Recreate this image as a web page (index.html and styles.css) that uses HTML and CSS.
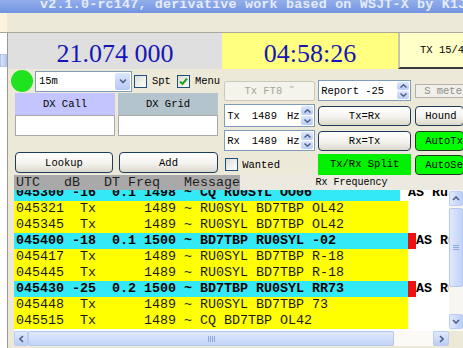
FILE: index.html
```html
<!DOCTYPE html>
<html lang="en">
<head>
    <meta charset="UTF-8">
    <meta name="viewport" content="width=device-width, initial-scale=1.0">
    <title>JTDX</title>
    <link rel="stylesheet" href="styles.css">
</head>
<body>
    <div class="titlebar">v2.1.0-rc147, derivative work based on WSJT-X by K1JT</div>
    <div class="menubar"><div class="menu-edge"></div></div>

    <div class="main">
        <div class="side-strip"><div class="side-btn"></div></div>

        <div class="content">
            <div class="displays">
                <div class="freq">21.074 000</div>
                <div class="clock">04:58:26</div>
                <div class="txbox">TX 15/45</div>
            </div>

            <div class="controls">
                <div class="left-col">
                    <div class="band-row">
                        <span class="led"></span>
                        <div class="combo">
                            <span class="combo-text">15m</span>
                            <span class="combo-btn">
                                <svg width="8" height="6" viewBox="0 0 8 6"><path d="M1 1.5 L4 4.5 L7 1.5" fill="none" stroke="#4d6185" stroke-width="1.6"/></svg>
                            </span>
                        </div>
                        <span class="box"></span><span class="check-label">Spt</span>
                        <span class="box menu-box">
                            <svg width="11" height="11" viewBox="0 0 11 11"><path d="M2 5.5 L4.5 8 L9 2.5" fill="none" stroke="#21a121" stroke-width="2"/></svg>
                        </span><span class="check-label">Menu</span>
                    </div>

                    <div class="dx-grid">
                        <div class="dx-head call">DX Call</div>
                        <div class="dx-head grid">DX Grid</div>
                        <div class="dx-input"></div>
                        <div class="dx-input"></div>
                    </div>

                    <div class="dx-buttons">
                        <button class="btn">Lookup</button>
                        <button class="btn">Add</button>
                    </div>
                </div>

                <div class="right-col">
                    <button class="btn disabled">Tx FT8 ˜</button>
                    <div class="spin">
                        <span class="spin-val">Report -25</span>
                        <span class="spin-btns">
                            <span><svg width="7" height="4" viewBox="0 0 7 4"><path d="M0.5 3.5 L3.5 0.8 L6.5 3.5" fill="none" stroke="#4d6185" stroke-width="1.5"/></svg></span>
                            <span><svg width="7" height="4" viewBox="0 0 7 4"><path d="M0.5 0.5 L3.5 3.2 L6.5 0.5" fill="none" stroke="#4d6185" stroke-width="1.5"/></svg></span>
                        </span>
                    </div>
                    <div class="smeter">S meter</div>

                    <div class="spin">
                        <span class="spin-val"><span>Tx</span><span class="hz-num">1489</span><span class="hz">Hz</span></span>
                        <span class="spin-btns">
                            <span><svg width="7" height="4" viewBox="0 0 7 4"><path d="M0.5 3.5 L3.5 0.8 L6.5 3.5" fill="none" stroke="#4d6185" stroke-width="1.5"/></svg></span>
                            <span><svg width="7" height="4" viewBox="0 0 7 4"><path d="M0.5 0.5 L3.5 3.2 L6.5 0.5" fill="none" stroke="#4d6185" stroke-width="1.5"/></svg></span>
                        </span>
                    </div>
                    <button class="btn">Tx=Rx</button>
                    <button class="btn side">Hound</button>

                    <div class="spin">
                        <span class="spin-val"><span>Rx</span><span class="hz-num">1489</span><span class="hz">Hz</span></span>
                        <span class="spin-btns">
                            <span><svg width="7" height="4" viewBox="0 0 7 4"><path d="M0.5 3.5 L3.5 0.8 L6.5 3.5" fill="none" stroke="#4d6185" stroke-width="1.5"/></svg></span>
                            <span><svg width="7" height="4" viewBox="0 0 7 4"><path d="M0.5 0.5 L3.5 3.2 L6.5 0.5" fill="none" stroke="#4d6185" stroke-width="1.5"/></svg></span>
                        </span>
                    </div>
                    <button class="btn">Rx=Tx</button>
                    <button class="btn side green">AutoTx</button>

                    <div class="wanted"><span class="box"></span><span class="check-label">Wanted</span></div>
                    <div class="split">Tx/Rx Split</div>
                    <button class="btn side green">AutoSeq</button>
                </div>
            </div>

            <div class="lists">
                <div class="list-head">
                    <div class="head-left">UTC   dB   DT Freq   Message</div>
                    <div class="head-right">Rx Frequency</div>
                </div>

                <div class="list-body">
                    <div class="rows">
                        <div class="rows-inner">
                            <div class="row bold"><span class="msg cq short">045300 -16  0.1 1498 ~ CQ RU0SYL OO06</span><span class="country gap">AS Russia</span></div>
                            <div class="row"><span class="msg tx">045321  Tx      1489 ~ RU0SYL BD7TBP OL42</span></div>
                            <div class="row"><span class="msg tx">045345  Tx      1489 ~ RU0SYL BD7TBP OL42</span></div>
                            <div class="row bold"><span class="msg cq">045400 -18  0.1 1500 ~ BD7TBP RU0SYL -02</span><span class="mark"></span><span class="country">AS Russia</span></div>
                            <div class="row"><span class="msg tx">045417  Tx      1489 ~ RU0SYL BD7TBP R-18</span></div>
                            <div class="row"><span class="msg tx">045445  Tx      1489 ~ RU0SYL BD7TBP R-18</span></div>
                            <div class="row bold"><span class="msg cq">045430 -25  0.2 1500 ~ BD7TBP RU0SYL RR73</span><span class="mark"></span><span class="country">AS Russia</span></div>
                            <div class="row"><span class="msg tx">045448  Tx      1489 ~ RU0SYL BD7TBP 73</span></div>
                            <div class="row"><span class="msg tx">045515  Tx      1489 ~ CQ BD7TBP OL42</span></div>
                        </div>
                    </div>
                    <div class="vscroll">
                        <div class="sb-btn">
                            <svg width="8" height="5" viewBox="0 0 8 5"><path d="M1 4 L4 1 L7 4" fill="none" stroke="#4d6185" stroke-width="1.6"/></svg>
                        </div>
                        <div class="sb-thumb v-thumb"><span class="grip-h"></span><span class="grip-h"></span><span class="grip-h"></span></div>
                        <div class="sb-fill"></div>
                        <div class="sb-btn">
                            <svg width="8" height="5" viewBox="0 0 8 5"><path d="M1 1 L4 4 L7 1" fill="none" stroke="#4d6185" stroke-width="1.6"/></svg>
                        </div>
                    </div>
                </div>

                <div class="hscroll">
                    <div class="sb-btn h-btn">
                        <svg width="5" height="8" viewBox="0 0 5 8"><path d="M4 1 L1 4 L4 7" fill="none" stroke="#4d6185" stroke-width="1.6"/></svg>
                    </div>
                    <div class="sb-thumb h-thumb"><span class="grip-v"></span><span class="grip-v"></span><span class="grip-v"></span><span class="grip-v"></span></div>
                    <div class="h-track"></div>
                    <div class="sb-btn h-btn right">
                        <svg width="5" height="8" viewBox="0 0 5 8"><path d="M1 1 L4 4 L1 7" fill="none" stroke="#4d6185" stroke-width="1.6"/></svg>
                    </div>
                    <div class="h-corner"></div>
                </div>
            </div>
        </div>
    </div>
</body>
</html>
```

FILE: styles.css
```css
* {
    margin: 0;
    padding: 0;
    box-sizing: border-box;
}

body {
    width: 463px;
    height: 348px;
    overflow: hidden;
    background: #ece9d8;
    font-family: "Liberation Mono", monospace;
    font-size: 10.5px;
    color: #000;
}

.titlebar {
    height: 13px;
    overflow: hidden;
    background: linear-gradient(#93aeea, #7294df);
    color: #e4ecfc;
    font-weight: bold;
    font-size: 13.33px;
    line-height: 9px;
    padding-left: 40px;
    letter-spacing: 0.2px;
    white-space: nowrap;
}

.menubar {
    height: 20px;
    display: flex;
    border-bottom: 1px solid #aca899;
}

.menu-edge {
    width: 7px;
    background: #fbf3dc;
}

.main {
    display: flex;
    height: 315px;
}

.side-strip {
    width: 8px;
    background: #fff;
    border-right: 1px solid #9a9a9a;
    padding-top: 21px;
}

.side-btn {
    height: 13px;
    background: linear-gradient(90deg, #d8e2fa, #b9cbf1);
    border: 1px solid #b3c4ea;
}

.content {
    flex: 1;
    min-width: 0;
    display: flex;
    flex-direction: column;
}

/* big displays */
.displays {
    display: flex;
    height: 36px;
}

.freq, .clock {
    font-family: "Liberation Serif", serif;
    font-size: 26px;
    color: #1616b6;
    text-align: center;
    padding-top: 5px;
    line-height: 31px;
}

.freq {
    width: 214px;
    background: #dfdfdf;
}

.clock {
    width: 176px;
    background: #ffff80;
}

.txbox {
    flex: 1;
    background: #ffffc8;
    border-left: 2px solid #c8c6b0;
    border-bottom: 2px solid #3a3a3a;
    padding-left: 20px;
    line-height: 34px;
    white-space: nowrap;
    overflow: hidden;
}

/* controls */
.controls {
    display: flex;
    height: 106px;
}

.left-col {
    width: 214px;
}

.band-row {
    display: flex;
    align-items: center;
    height: 22px;
    margin-top: 1px;
}

.led {
    width: 22px;
    height: 22px;
    margin-left: 3px;
    border-radius: 50%;
    background: #1fe31f;
}

.combo {
    display: flex;
    width: 97px;
    height: 21px;
    margin-left: 2px;
    background: #fff;
    border: 1px solid #7f9db9;
}

.combo-text {
    flex: 1;
    padding-left: 3px;
    line-height: 19px;
}

.combo-btn {
    width: 15px;
    margin: 1px;
    border-radius: 2px;
    background: linear-gradient(#dce6fd, #b5c9f5);
    display: flex;
    align-items: center;
    justify-content: center;
}

.box {
    width: 13px;
    height: 13px;
    margin-left: 2px;
    border: 1px solid #1c5180;
    background: linear-gradient(135deg, #dcdcd7, #fff);
    display: flex;
    align-items: center;
    justify-content: center;
}

.menu-box {
    margin-left: 6px;
}

.check-label {
    margin-left: 5px;
}

.dx-grid {
    display: grid;
    grid-template-columns: 100px 100px;
    grid-template-rows: 22px 21px;
    column-gap: 3px;
    margin: 1px 0 0 7px;
}

.dx-head {
    text-align: center;
    line-height: 22px;
}

.dx-head.call {
    background: #c4c4ff;
}

.dx-head.grid {
    background: #b3c4cc;
}

.dx-input {
    background: #fff;
    border: 1px solid #a9a9a9;
}

.dx-buttons {
    display: grid;
    grid-template-columns: 98px 99px;
    column-gap: 6px;
    height: 21px;
    margin: 16px 0 0 7px;
}

.btn {
    font: inherit;
    color: #000;
    border: 1px solid #1f3b5c;
    border-radius: 4px;
    background: linear-gradient(#ffffff, #f3f2ed 55%, #dcd8cb);
    white-space: nowrap;
    overflow: hidden;
}

.btn.disabled {
    height: 18px;
    border: 1px solid #cbc8b8;
    border-radius: 2px;
    background: #f4f3ec;
    color: #a8a596;
}

.btn.green {
    background: #00ff00;
    border-color: #233a20;
}

.right-col {
    flex: 1;
    display: grid;
    grid-template-columns: 91px 93px 50px;
    grid-template-rows: 21px 23px 21px 21px;
    column-gap: 3px;
    row-gap: 3px;
    padding: 11px 0 0 4px;
    align-items: center;
}

.right-col .btn {
    height: 20px;
}

.right-col .btn.side {
    margin-left: 1px;
    text-align: left;
    padding-left: 9px;
}

.spin {
    display: flex;
    height: 100%;
    background: #fff;
    border: 1px solid #7f9db9;
}

.spin-val {
    flex: 1;
    display: flex;
    align-items: center;
    padding-left: 2px;
    white-space: nowrap;
}

.hz-num {
    margin-left: 12px;
}

.hz {
    margin-left: 10px;
}

.spin-btns {
    width: 14px;
    display: flex;
    flex-direction: column;
    gap: 1px;
    padding: 1px;
}

.spin-btns span {
    flex: 1;
    border-radius: 2px;
    background: linear-gradient(#dce6fd, #b8ccf6);
    display: flex;
    align-items: center;
    justify-content: center;
}

.smeter {
    height: 14px;
    margin-left: 1px;
    padding-left: 8px;
    line-height: 12px;
    border: 1px solid #b5b3a6;
    background: #f0efea;
    color: #8e8c82;
    white-space: nowrap;
}

.wanted {
    display: flex;
    align-items: center;
}

.wanted .box {
    margin-left: 1px;
}

.wanted .check-label {
    margin-left: 4px;
}

.split {
    height: 21px;
    background: #00f000;
    text-align: center;
    line-height: 21px;
}

/* decode lists */
.lists {
    display: flex;
    flex-direction: column;
}

.list-head {
    display: flex;
    height: 15px;
}

.head-left {
    width: 226px;
    margin-left: 6px;
    padding-left: 2px;
    background: #a9a9a9;
    color: #1e1e1e;
    font-size: 13.33px;
    line-height: 15px;
    white-space: pre;
    overflow: hidden;
}

.head-right {
    flex: 1;
    background: #ebe9e0;
    text-align: center;
    font-size: 10px;
    line-height: 15px;
}

.list-body {
    display: flex;
    height: 141px;
    margin-left: 6px;
}

.rows {
    flex: 1;
    min-width: 0;
    background: #fff;
    overflow: hidden;
    font-size: 13.33px;
}

.rows-inner {
    margin-top: -5px;
}

.row {
    display: flex;
    height: 16px;
    line-height: 16px;
    white-space: pre;
}

.row.bold {
    font-weight: bold;
}

.msg {
    width: 394px;
    padding-left: 2px;
    flex-shrink: 0;
}

.msg.short {
    width: 386px;
}

.msg.cq {
    background: #33e9f6;
}

.msg.tx {
    background: #ffff00;
    color: #1a1a1a;
}

.mark {
    width: 8px;
    flex-shrink: 0;
    background: #ee1111;
}

.country.gap {
    padding-left: 8px;
}

.vscroll {
    width: 14px;
    display: flex;
    flex-direction: column;
    background: #f7f6f1;
    padding: 1px 0 2px;
}

.sb-btn {
    height: 15px;
    border: 1px solid #bccdf3;
    border-radius: 2px;
    background: linear-gradient(90deg, #e0e9fd, #bccef6);
    display: flex;
    align-items: center;
    justify-content: center;
}

.sb-thumb {
    border: 1px solid #b6c8f0;
    border-radius: 2px;
    background: linear-gradient(90deg, #dfe8fd, #c3d4f8);
    display: flex;
    align-items: center;
    justify-content: center;
    gap: 1px;
}

.v-thumb {
    height: 79px;
    margin-top: 2px;
    flex-direction: column;
}

.grip-h {
    width: 6px;
    height: 1px;
    background: #8ea6dc;
}

.sb-fill {
    flex: 1;
}

.hscroll {
    display: flex;
    height: 15px;
    margin-left: 6px;
}

.h-btn {
    width: 14px;
    height: 15px;
    background: linear-gradient(#e0e9fd, #bccef6);
}

.h-btn.right {
    width: 16px;
}

.h-thumb {
    width: 366px;
    background: linear-gradient(#dfe8fd, #c3d4f8);
}

.grip-v {
    width: 1px;
    height: 6px;
    background: #8ea6dc;
}

.h-track {
    width: 39px;
    background: #fbfaf6;
}

.h-corner {
    flex: 1;
    background: #ece9d8;
}
```
